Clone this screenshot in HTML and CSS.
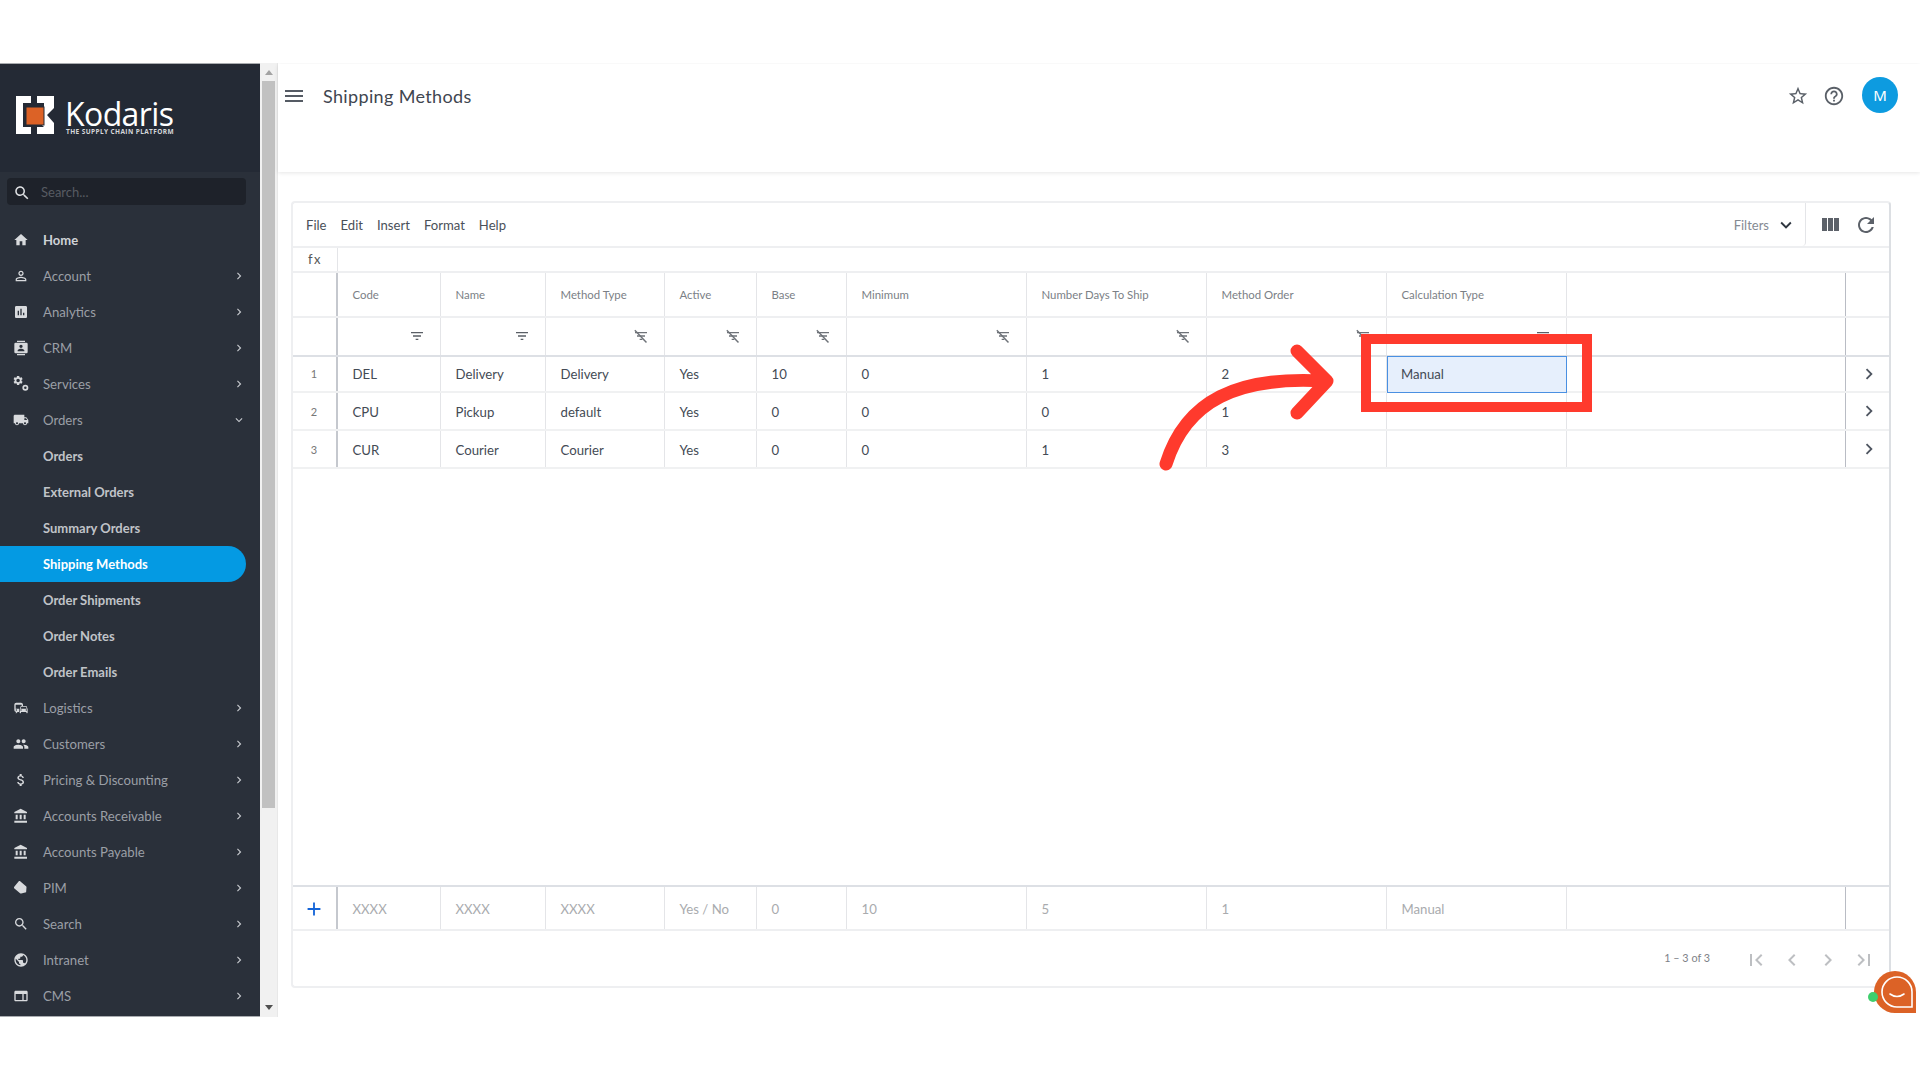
FILE: index.html
```html
<!DOCTYPE html>
<html lang="en">
<head>
<meta charset="utf-8">
<title>Shipping Methods</title>
<link rel="stylesheet" href="styles.css">
</head>
<body>
<svg class="sprite" aria-hidden="true">
  <symbol id="i-home" viewBox="0 0 24 24"><path d="M10 20v-6h4v6h5v-8h3L12 3 2 12h3v8z"/></symbol>
  <symbol id="i-search" viewBox="0 0 24 24"><path d="M15.5 14h-.79l-.28-.27C15.41 12.59 16 11.11 16 9.5 16 5.91 13.09 3 9.5 3S3 5.91 3 9.5 5.91 16 9.5 16c1.61 0 3.09-.59 4.23-1.57l.27.28v.79l5 4.99L20.49 19l-4.99-5zm-6 0C7.01 14 5 11.99 5 9.5S7.01 5 9.5 5 14 7.01 14 9.5 11.99 14 9.5 14z"/></symbol>
  <symbol id="i-person" viewBox="0 0 24 24"><path d="M12 5.9c1.16 0 2.1.94 2.1 2.1s-.94 2.1-2.1 2.1S9.9 9.16 9.9 8s.94-2.1 2.1-2.1m0 9c2.97 0 6.1 1.46 6.1 2.1v1.1H5.9V17c0-.64 3.13-2.1 6.1-2.1M12 4C9.79 4 8 5.79 8 8s1.79 4 4 4 4-1.79 4-4-1.79-4-4-4zm0 9c-2.67 0-8 1.34-8 4v3h16v-3c0-2.66-5.33-4-8-4z"/></symbol>
  <symbol id="i-chart" viewBox="0 0 24 24"><path d="M19 3H5c-1.1 0-2 .9-2 2v14c0 1.1.9 2 2 2h14c1.1 0 2-.9 2-2V5c0-1.1-.9-2-2-2zM9 17H7v-7h2v7zm4 0h-2V7h2v10zm4 0h-2v-4h2v4z"/></symbol>
  <symbol id="i-contact" viewBox="0 0 24 24"><path fill-rule="evenodd" d="M6 1h12v2H6zM6 21h12v2H6zM4 4h16a2 2 0 0 1 2 2v12a2 2 0 0 1-2 2H4a2 2 0 0 1-2-2V6a2 2 0 0 1 2-2zm8 3a2.5 2.5 0 1 0 0 5 2.5 2.5 0 0 0 0-5zm-5 10h10v-1.5c0-1.7-3.3-2.5-5-2.5s-5 .8-5 2.5z"/></symbol>
  <symbol id="i-gears" viewBox="0 0 24 24"><g transform="translate(-1 -2) scale(.72)"><path d="M19.14 12.94c.04-.3.06-.61.06-.94 0-.32-.02-.64-.07-.94l2.03-1.58c.18-.14.23-.41.12-.61l-1.92-3.32c-.12-.22-.37-.29-.59-.22l-2.39.96c-.5-.38-1.03-.7-1.62-.94l-.36-2.54c-.04-.24-.24-.41-.48-.41h-3.84c-.24 0-.43.17-.47.41l-.36 2.54c-.59.24-1.13.57-1.62.94l-2.39-.96c-.22-.08-.47 0-.59.22L2.74 8.87c-.12.21-.08.47.12.61l2.03 1.58c-.05.3-.09.63-.09.94s.02.64.07.94l-2.03 1.58c-.18.14-.23.41-.12.61l1.92 3.32c.12.22.37.29.59.22l2.39-.96c.5.38 1.03.7 1.62.94l.36 2.54c.05.24.24.41.48.41h3.84c.24 0 .44-.17.47-.41l.36-2.54c.59-.24 1.13-.56 1.62-.94l2.39.96c.22.08.47 0 .59-.22l1.92-3.32c.12-.22.07-.47-.12-.61l-2.01-1.58zM12 15.6c-1.98 0-3.6-1.62-3.6-3.6s1.62-3.6 3.6-3.6 3.6 1.62 3.6 3.6-1.62 3.6-3.6 3.6z"/></g><path fill-rule="evenodd" d="M18.5 13a4.5 4.5 0 1 0 0 9 4.5 4.5 0 0 0 0-9zm0 2.6a1.9 1.9 0 1 1 0 3.8 1.9 1.9 0 0 1 0-3.8z"/></symbol>
  <symbol id="i-truck" viewBox="0 0 24 24"><path d="M20 8h-3V4H3c-1.1 0-2 .9-2 2v11h2c0 1.66 1.34 3 3 3s3-1.34 3-3h6c0 1.66 1.34 3 3 3s3-1.34 3-3h2v-5l-3-4zM6 18.5c-.83 0-1.5-.67-1.5-1.5s.67-1.5 1.5-1.5 1.5.67 1.5 1.5-.67 1.5-1.5 1.5zm13.5-9l1.96 2.5H17V9.5h2.5zm-1.5 9c-.83 0-1.5-.67-1.5-1.5s.67-1.5 1.5-1.5 1.5.67 1.5 1.5-.67 1.5-1.5 1.5z"/></symbol>
  <symbol id="i-commute" viewBox="0 0 24 24"><path d="M12 4H5C3.34 4 2 5.34 2 7v8c0 1.66 1.34 3 3 3l-1 1v1h1l2-2h2v-5H4V6.98L13 7v2h2V7c0-1.66-1.34-3-3-3zM5 14c.55 0 1 .45 1 1s-.45 1-1 1-1-.45-1-1 .45-1 1-1zm15.57-4.34c-.14-.4-.52-.66-.97-.66h-7.19c-.46 0-.83.26-.98.66L10 13.77l.01 5.51c0 .38.31.72.69.72h.62c.38 0 .68-.38.68-.76V18h8v1.24c0 .38.31.76.69.76h.61c.38 0 .69-.34.69-.72l.01-5.51-1.43-4.11zm-8.16.34h7.19l1.03 3h-9.25l1.03-3zM12 16c-.55 0-1-.45-1-1s.45-1 1-1 1 .45 1 1-.45 1-1 1zm8 0c-.55 0-1-.45-1-1s.45-1 1-1 1 .45 1 1-.45 1-1 1z"/></symbol>
  <symbol id="i-people" viewBox="0 0 24 24"><path d="M16 11c1.66 0 2.99-1.34 2.99-3S17.66 5 16 5c-1.66 0-3 1.34-3 3s1.34 3 3 3zm-8 0c1.66 0 2.99-1.34 2.99-3S9.66 5 8 5C6.34 5 5 6.34 5 8s1.34 3 3 3zm0 2c-2.33 0-7 1.17-7 3.5V19h14v-2.5c0-2.33-4.67-3.5-7-3.5zm8 0c-.29 0-.62.02-.97.05 1.16.84 1.97 1.97 1.97 3.45V19h6v-2.5c0-2.33-4.67-3.5-7-3.5z"/></symbol>
  <symbol id="i-money" viewBox="0 0 24 24"><path d="M11.8 10.9c-2.27-.59-3-1.2-3-2.15 0-1.09 1.01-1.85 2.7-1.85 1.78 0 2.44.85 2.5 2.1h2.21c-.07-1.72-1.12-3.3-3.21-3.81V3h-3v2.16c-1.94.42-3.5 1.68-3.5 3.61 0 2.31 1.91 3.46 4.7 4.13 2.5.6 3 1.48 3 2.41 0 .69-.49 1.79-2.7 1.79-2.06 0-2.87-.92-2.98-2.1h-2.2c.12 2.19 1.76 3.42 3.68 3.83V21h3v-2.15c1.95-.37 3.5-1.5 3.5-3.55 0-2.84-2.43-3.81-4.7-4.4z"/></symbol>
  <symbol id="i-bank" viewBox="0 0 24 24"><path d="M4 10v7h3v-7H4zm6 0v7h3v-7h-3zM2 22h19v-3H2v3zm14-12v7h3v-7h-3zm-4.5-9L2 6v2h19V6l-9.5-5z"/></symbol>
  <symbol id="i-tag" viewBox="0 0 24 24"><path transform="rotate(40 12 12)" d="M17.63 5.84C17.27 5.33 16.67 5 16 5L5 5.01C3.9 5.01 3 5.9 3 7v10c0 1.1.9 1.99 2 1.99L16 19c.67 0 1.27-.33 1.63-.84L22 12l-4.37-6.16z"/></symbol>
  <symbol id="i-globe" viewBox="0 0 24 24"><path d="M12 2C6.48 2 2 6.48 2 12s4.48 10 10 10 10-4.48 10-10S17.52 2 12 2zm-1 17.93c-3.95-.49-7-3.85-7-7.93 0-.62.08-1.21.21-1.79L9 15v1c0 1.1.9 2 2 2v1.93zm6.9-2.54c-.26-.81-1-1.39-1.9-1.39h-1v-3c0-.55-.45-1-1-1H8v-2h2c.55 0 1-.45 1-1V7h2c1.1 0 2-.9 2-2v-.41c2.93 1.19 5 4.06 5 7.41 0 2.08-.8 3.97-2.1 5.39z"/></symbol>
  <symbol id="i-web" viewBox="0 0 24 24"><path d="M20 4H4c-1.1 0-1.99.9-1.99 2L2 18c0 1.1.9 2 2 2h16c1.1 0 2-.9 2-2V6c0-1.1-.9-2-2-2zm0 14h-4V9h4v9zm-6 0H4V9h10v9z"/></symbol>
  <symbol id="i-right" viewBox="0 0 24 24"><path d="M10 6L8.59 7.41 13.17 12l-4.58 4.59L10 18l6-6z"/></symbol>
  <symbol id="i-left" viewBox="0 0 24 24"><path d="M15.41 7.41L14 6l-6 6 6 6 1.41-1.41L10.83 12z"/></symbol>
  <symbol id="i-down" viewBox="0 0 24 24"><path d="M16.59 8.59L12 13.17 7.41 8.59 6 10l6 6 6-6z"/></symbol>
  <symbol id="i-first" viewBox="0 0 24 24"><path d="M18.41 16.59L13.82 12l4.59-4.59L17 6l-6 6 6 6zM6 6h2v12H6z"/></symbol>
  <symbol id="i-last" viewBox="0 0 24 24"><path d="M5.59 7.41L10.18 12l-4.59 4.59L7 18l6-6-6-6zM16 6h2v12h-2z"/></symbol>
  <symbol id="i-menu" viewBox="0 0 24 24"><path d="M3 18h18v-2H3v2zm0-5h18v-2H3v2zm0-7v2h18V6H3z"/></symbol>
  <symbol id="i-star" viewBox="0 0 24 24"><path d="M22 9.24l-7.19-.62L12 2 9.19 8.63 2 9.24l5.46 4.73L5.82 21 12 17.27 18.18 21l-1.63-7.03L22 9.24zM12 15.4l-3.76 2.27 1-4.28-3.32-2.88 4.38-.38L12 6.1l1.71 4.04 4.38.38-3.32 2.88 1 4.28L12 15.4z"/></symbol>
  <symbol id="i-help" viewBox="0 0 24 24"><path d="M11 18h2v-2h-2v2zm1-16C6.48 2 2 6.48 2 12s4.48 10 10 10 10-4.48 10-10S17.52 2 12 2zm0 18c-4.41 0-8-3.59-8-8s3.59-8 8-8 8 3.59 8 8-3.59 8-8 8zm0-14c-2.21 0-4 1.79-4 4h2c0-1.1.9-2 2-2s2 .9 2 2c0 2-3 1.75-3 5h2c0-2.25 3-2.5 3-5 0-2.21-1.79-4-4-4z"/></symbol>
  <symbol id="i-cols" viewBox="0 0 24 24"><path d="M10 18h5V5h-5v13zm-6 0h5V5H4v13zM16 5v13h5V5h-5z"/></symbol>
  <symbol id="i-refresh" viewBox="0 0 24 24"><path d="M17.65 6.35C16.2 4.9 14.21 4 12 4c-4.42 0-7.99 3.58-7.99 8s3.57 8 7.99 8c3.73 0 6.84-2.55 7.73-6h-2.08c-.82 2.33-3.04 4-5.65 4-3.31 0-6-2.69-6-6s2.69-6 6-6c1.66 0 3.14.69 4.22 1.78L13 11h7V4l-2.35 2.35z"/></symbol>
  <symbol id="i-filter" viewBox="0 0 24 24"><path d="M10 18h4v-2h-4v2zM3 6v2h18V6H3zm3 7h12v-2H6v2z"/></symbol>
  <symbol id="i-nofilter" viewBox="0 0 24 24"><path d="M10 18h4v-2h-4v2zM3 6v2h18V6H3zm3 7h12v-2H6v2z"/><path d="M3.5 2.5L21 21l-1.6 1.5L2 4z"/></symbol>
  <symbol id="i-add" viewBox="0 0 24 24"><path d="M19 13h-6v6h-2v-6H5v-2h6V5h2v6h6v2z"/></symbol>
</svg>

<div class="app">
  <aside class="sidebar">
    <div class="sidebar-body">
      <div class="brand">
        <svg class="brand-mark" viewBox="0 0 40 40">
          <path class="mark-white" d="M1 1h15v7H8v24h8v7H1z"/>
          <path class="mark-white" d="M22 1h17v12l-7 7 7 8v11H22v-7h7l-6-6v-7l6-6V8h-7z"/>
          <rect class="mark-orange" x="11" y="12" width="18" height="18"/>
        </svg>
        <div class="brand-text">
          <div class="brand-name">Kodaris</div>
          <div class="brand-tag">THE SUPPLY CHAIN PLATFORM</div>
        </div>
      </div>
      <div class="side-search">
        <svg class="side-search-icon"><use href="#i-search"/></svg>
        <span>Search...</span>
      </div>
      <nav class="nav">
        <a class="nav-item is-home"><svg class="nav-icon"><use href="#i-home"/></svg><span class="nav-label">Home</span></a>
        <a class="nav-item"><svg class="nav-icon"><use href="#i-person"/></svg><span class="nav-label">Account</span><svg class="nav-arrow"><use href="#i-right"/></svg></a>
        <a class="nav-item"><svg class="nav-icon"><use href="#i-chart"/></svg><span class="nav-label">Analytics</span><svg class="nav-arrow"><use href="#i-right"/></svg></a>
        <a class="nav-item"><svg class="nav-icon"><use href="#i-contact"/></svg><span class="nav-label">CRM</span><svg class="nav-arrow"><use href="#i-right"/></svg></a>
        <a class="nav-item"><svg class="nav-icon"><use href="#i-gears"/></svg><span class="nav-label">Services</span><svg class="nav-arrow"><use href="#i-right"/></svg></a>
        <a class="nav-item"><svg class="nav-icon"><use href="#i-truck"/></svg><span class="nav-label">Orders</span><svg class="nav-arrow"><use href="#i-down"/></svg></a>
        <a class="nav-item sub">Orders</a>
        <a class="nav-item sub">External Orders</a>
        <a class="nav-item sub">Summary Orders</a>
        <a class="nav-item sub active">Shipping Methods</a>
        <a class="nav-item sub">Order Shipments</a>
        <a class="nav-item sub">Order Notes</a>
        <a class="nav-item sub">Order Emails</a>
        <a class="nav-item"><svg class="nav-icon"><use href="#i-commute"/></svg><span class="nav-label">Logistics</span><svg class="nav-arrow"><use href="#i-right"/></svg></a>
        <a class="nav-item"><svg class="nav-icon"><use href="#i-people"/></svg><span class="nav-label">Customers</span><svg class="nav-arrow"><use href="#i-right"/></svg></a>
        <a class="nav-item"><svg class="nav-icon"><use href="#i-money"/></svg><span class="nav-label">Pricing &amp; Discounting</span><svg class="nav-arrow"><use href="#i-right"/></svg></a>
        <a class="nav-item"><svg class="nav-icon"><use href="#i-bank"/></svg><span class="nav-label">Accounts Receivable</span><svg class="nav-arrow"><use href="#i-right"/></svg></a>
        <a class="nav-item"><svg class="nav-icon"><use href="#i-bank"/></svg><span class="nav-label">Accounts Payable</span><svg class="nav-arrow"><use href="#i-right"/></svg></a>
        <a class="nav-item"><svg class="nav-icon"><use href="#i-tag"/></svg><span class="nav-label">PIM</span><svg class="nav-arrow"><use href="#i-right"/></svg></a>
        <a class="nav-item"><svg class="nav-icon"><use href="#i-search"/></svg><span class="nav-label">Search</span><svg class="nav-arrow"><use href="#i-right"/></svg></a>
        <a class="nav-item"><svg class="nav-icon"><use href="#i-globe"/></svg><span class="nav-label">Intranet</span><svg class="nav-arrow"><use href="#i-right"/></svg></a>
        <a class="nav-item"><svg class="nav-icon"><use href="#i-web"/></svg><span class="nav-label">CMS</span><svg class="nav-arrow"><use href="#i-right"/></svg></a>
      </nav>
    </div>
    <div class="scrollbar">
      <div class="sb-up"></div>
      <div class="sb-thumb"></div>
      <div class="sb-down"></div>
    </div>
  </aside>

  <main class="main">
    <header class="topbar">
      <svg class="topbar-menu"><use href="#i-menu"/></svg>
      <h1 class="title">Shipping Methods</h1>
      <div class="topbar-actions">
        <svg class="top-icon"><use href="#i-star"/></svg>
        <svg class="top-icon"><use href="#i-help"/></svg>
        <div class="avatar">M</div>
      </div>
    </header>

    <section class="card">
      <div class="menubar">
        <div class="menu-items"><span>File</span><span>Edit</span><span>Insert</span><span>Format</span><span>Help</span></div>
        <div class="filters"><span>Filters</span><svg class="filters-arrow"><use href="#i-down"/></svg></div>
        <div class="tools">
          <svg class="tool-icon"><use href="#i-cols"/></svg>
          <svg class="tool-icon"><use href="#i-refresh"/></svg>
        </div>
      </div>
      <div class="fx-row"><div class="fx">fx</div></div>

      <div class="row head">
        <div class="cell idx"></div>
        <div class="cell">Code</div><div class="cell">Name</div><div class="cell">Method Type</div><div class="cell">Active</div><div class="cell">Base</div><div class="cell">Minimum</div><div class="cell">Number Days To Ship</div><div class="cell">Method Order</div><div class="cell">Calculation Type</div>
        <div class="cell end"></div><div class="cell"></div>
      </div>
      <div class="row filter-row">
        <div class="cell idx"></div>
        <div class="cell"><svg class="fi on"><use href="#i-filter"/></svg></div>
        <div class="cell"><svg class="fi on"><use href="#i-filter"/></svg></div>
        <div class="cell"><svg class="fi"><use href="#i-nofilter"/></svg></div>
        <div class="cell"><svg class="fi"><use href="#i-nofilter"/></svg></div>
        <div class="cell"><svg class="fi"><use href="#i-nofilter"/></svg></div>
        <div class="cell"><svg class="fi"><use href="#i-nofilter"/></svg></div>
        <div class="cell"><svg class="fi"><use href="#i-nofilter"/></svg></div>
        <div class="cell"><svg class="fi"><use href="#i-nofilter"/></svg></div>
        <div class="cell"><svg class="fi on"><use href="#i-filter"/></svg></div>
        <div class="cell end"></div><div class="cell"></div>
      </div>
      <div class="row data first">
        <div class="cell idx">1</div><div class="cell">DEL</div><div class="cell">Delivery</div><div class="cell">Delivery</div><div class="cell">Yes</div><div class="cell">10</div><div class="cell">0</div><div class="cell">1</div><div class="cell">2</div><div class="cell selected">Manual</div>
        <div class="cell end"></div><div class="cell go"><svg class="go-icon"><use href="#i-right"/></svg></div>
      </div>
      <div class="row data">
        <div class="cell idx">2</div><div class="cell">CPU</div><div class="cell">Pickup</div><div class="cell">default</div><div class="cell">Yes</div><div class="cell">0</div><div class="cell">0</div><div class="cell">0</div><div class="cell">1</div><div class="cell"></div>
        <div class="cell end"></div><div class="cell go"><svg class="go-icon"><use href="#i-right"/></svg></div>
      </div>
      <div class="row data">
        <div class="cell idx">3</div><div class="cell">CUR</div><div class="cell">Courier</div><div class="cell">Courier</div><div class="cell">Yes</div><div class="cell">0</div><div class="cell">0</div><div class="cell">1</div><div class="cell">3</div><div class="cell"></div>
        <div class="cell end"></div><div class="cell go"><svg class="go-icon"><use href="#i-right"/></svg></div>
      </div>
      <div class="grid-space"></div>
      <div class="row add-row">
        <div class="cell idx"><svg class="add-icon"><use href="#i-add"/></svg></div>
        <div class="cell">XXXX</div><div class="cell">XXXX</div><div class="cell">XXXX</div><div class="cell">Yes / No</div><div class="cell">0</div><div class="cell">10</div><div class="cell">5</div><div class="cell">1</div><div class="cell">Manual</div>
        <div class="cell end"></div><div class="cell"></div>
      </div>
      <div class="pager">
        <span class="pager-text">1 – 3 of 3</span>
        <svg class="pager-icon"><use href="#i-first"/></svg>
        <svg class="pager-icon"><use href="#i-left"/></svg>
        <svg class="pager-icon"><use href="#i-right"/></svg>
        <svg class="pager-icon"><use href="#i-last"/></svg>
      </div>
    </section>
  </main>
</div>

<div class="callout"></div>
<svg class="arrow" viewBox="0 0 1920 1080">
  <path d="M1166 464C1186 400 1238 376 1324 381M1297 351L1327 381L1297 413"/>
</svg>
<div class="chat">
  <svg class="chat-face" viewBox="0 0 42 42">
    <path class="chat-bg" d="M21 0a21 21 0 0 1 21 21v21H21a21 21 0 0 1 0-42z"/>
    <path class="chat-line" d="M23 6a15 15 0 0 1 15 15v15H23a15 15 0 0 1 0-30z"/>
    <path class="chat-line" d="M16 23q7 5 14 0"/>
  </svg>
  <span class="chat-dot"></span>
</div>
</body>
</html>
```

FILE: styles.css
```css
* { box-sizing: border-box; }
html, body { margin: 0; padding: 0; }
body {
  width: 1920px;
  height: 1080px;
  overflow: hidden;
  background: #fff;
  font-family: "Lato", "Noto Sans", sans-serif;
  color: #444b55;
  padding-top: 63px;
  position: relative;
}
.sprite { position: absolute; width: 0; height: 0; }
svg { fill: currentColor; display: block; }

.app {
  display: flex;
  height: 954px;
  overflow: hidden;
}

/* sidebar */
.sidebar { width: 278px; flex: none; display: flex; height: 100%; }
.sidebar-body {
  width: 260px;
  flex: none;
  background: #2a303a;
  overflow: hidden;
  border-top: 1px solid #a9acb0;
  border-bottom: 1px solid #a9acb0;
}
.brand {
  height: 108px;
  background: #242a35;
  display: flex;
  align-items: flex-start;
  padding: 31px 0 0 15px;
}
.brand-mark { width: 40px; height: 40px; flex: none; }
.mark-white { fill: #fff; }
.mark-orange { fill: #dc6226; stroke: #242a35; stroke-width: 1; }
.brand-text { margin-left: 10px; }
.brand-name { font-size: 32px; line-height: 26px; color: #fff; font-weight: 500; font-family: "Open Sans", sans-serif; letter-spacing: -.6px; margin-top: 6px; }
.brand-tag { font-size: 6.5px; line-height: 8px; font-weight: 700; color: #d5d7da; letter-spacing: .4px; white-space: nowrap; font-family: "Open Sans", sans-serif; margin: 1px 0 0 1px; }
.side-search {
  margin: 6px 14px 0 7px;
  height: 27px;
  background: #1e222a;
  border-radius: 4px;
  display: flex;
  align-items: center;
  padding-left: 6px;
  font-size: 13px;
  color: #575b62;
}
.side-search-icon { width: 18px; height: 18px; color: #dfe1e4; margin: 2px 10px 0 0; }
.nav { padding-top: 17px; }
.nav-item {
  display: flex;
  align-items: center;
  width: 246px;
  height: 36px;
  padding-left: 13px;
  font-size: 13.2px;
  color: #9b9fa6;
}
.nav-icon { width: 16px; height: 16px; color: #d8dadd; flex: none; margin-right: 14px; }
.nav-label { flex: 1; }
.nav-arrow { width: 14px; height: 14px; color: #c4c7cc; flex: none; }
.is-home { color: #d0d3d7; font-weight: 700; font-size: 13px; }
.sub { padding-left: 43px; color: #c0c3c8; font-weight: 700; font-size: 13px; }
.active {
  background: #049ae3;
  color: #fff;
  border-radius: 0 18px 18px 0;
}

/* page scrollbar */
.scrollbar {
  width: 18px;
  flex: none;
  background: #f1f1f1;
  display: flex;
  flex-direction: column;
  align-items: flex-start;
  padding-left: 2px;
  border-right: 1px solid #e8e8e8;
}
.sb-up { width: 0; height: 0; margin: 7px 0 6px 3px; border: 4px solid transparent; border-top: 0; border-bottom: 5px solid #a3a3a3; }
.sb-thumb { width: 13px; height: 727px; background: #c1c1c1; }
.sb-down { width: 0; height: 0; margin: auto 0 7px 3px; border: 4px solid transparent; border-bottom: 0; border-top: 5px solid #505050; }

/* main */
.main { flex: 1; min-width: 0; padding-top: 1px; }
.topbar {
  height: 108px;
  display: flex;
  align-items: flex-start;
  padding: 12px 22px 0 4px;
  box-shadow: 0 1px 4px rgba(0,0,0,.1);
  background: #fff;
}
.topbar-menu { width: 24px; height: 24px; color: #555b64; margin-top: 8px; }
.title { margin: 6px 0 0 17px; font-size: 18px; line-height: 28px; font-weight: 400; color: #3f4650; flex: 1; letter-spacing: .35px; }
.topbar-actions { display: flex; align-items: center; margin-top: 1px; }
.top-icon { width: 22px; height: 22px; color: #5a6068; margin-right: 14px; margin-top: 1px; }
.avatar {
  width: 36px;
  height: 36px;
  margin-left: 3px;
  border-radius: 50%;
  background: #0d9be0;
  color: #fff;
  font-size: 15px;
  display: flex;
  align-items: center;
  justify-content: center;
  font-family: "Noto Sans", sans-serif;
}

/* card */
.card {
  margin: 29px 29px 0 13px;
  height: 787px;
  border: 2px solid #eeeff1;
  border-right-color: #dcdfe3;
  border-radius: 4px;
  display: flex;
  flex-direction: column;
  font-size: 13.2px;
}
.menubar {
  height: 45px;
  flex: none;
  display: flex;
  align-items: center;
  border-bottom: 2px solid #eeeff1;
}
.menu-items { display: flex; gap: 14px; padding-left: 13px; flex: 1; color: #4a5059; font-size: 13.1px; }
.filters { display: flex; align-items: center; font-size: 13px; color: #858a92; height: 100%; padding-right: 8px; border-right: 1px solid #e4e5e8; border-radius: 0 0 4px 0; }
.filters-arrow { width: 22px; height: 22px; color: #2f3640; margin-left: 6px; }
.tools { display: flex; align-items: center; gap: 12px; padding: 0 11px 0 12px; }
.tool-icon { width: 24px; height: 24px; color: #5c6169; }
.fx-row { height: 25px; flex: none; border-bottom: 2px solid #eeeff1; }
.fx { width: 45px; height: 100%; text-align: center; font-size: 13px; line-height: 22px; border-right: 1px solid #e4e5e8; letter-spacing: 1.5px; color: #555; }

.row {
  display: grid;
  grid-template-columns: 45px 103px 105px 119px 92px 90px 180px 180px 180px 180px 279px 1fr;
  flex: none;
}
.cell {
  display: flex;
  align-items: center;
  padding-left: 14.5px;
  border-right: 1px solid #e4e5e8;
  min-width: 0;
}
.cell:last-child { border-right: 0; }
.cell.idx { padding-left: 0; padding-right: 1px; justify-content: center; border-right: 2px solid #c5c8ce; font-size: 11px; color: #777; }
.cell.end { border-right-color: #b9bcc4; }
.head { height: 45px; border-bottom: 2px solid #eeeff1; font-size: 11.4px; color: #7b7f86; }
.filter-row { height: 39px; border-bottom: 2px solid #dde0e5; }
.filter-row .cell { justify-content: flex-end; padding: 0 15px 2px 0; }
.fi { width: 16px; height: 16px; color: #6e7278; }
.fi.on { color: #5a5f66; }
.data { height: 38px; border-bottom: 2px solid #f0f1f2; }
.data .cell { padding-top: 1px; }
.data.first { height: 36px; }
.data.first .cell { padding-top: 0; padding-bottom: 1px; }
.data.first .selected { padding: 0 0 2px 13px; background: #e6effc; border: 1.5px solid #4a90e2; margin: -1px 0 -2px; }
.data .go { padding: 0; justify-content: center; }
.go-icon { width: 22px; height: 22px; color: #4f5661; margin-left: 2px; }
.grid-space { flex: 1; }
.add-row { height: 46px; border-top: 2px solid #dde0e5; border-bottom: 2px solid #eeeff1; color: #a9abae; }
.add-row .cell { padding-top: 1px; }
.add-icon { width: 22px; height: 22px; color: #1565d8; }
.pager {
  height: 55px;
  flex: none;
  display: flex;
  align-items: center;
  justify-content: flex-end;
  padding: 3px 13px 0 0;
  color: #bdbfc2;
}
.pager-text { font-size: 10.8px; color: #7d8187; margin: -6px 22px 0 0; }
.pager-icon { width: 24px; height: 24px; margin-left: 12px; }

/* annotation overlays */
.callout {
  position: absolute;
  left: 1361px;
  top: 334px;
  width: 231px;
  height: 78px;
  border: 10px solid #ff3a2d;
}
.arrow {
  position: absolute;
  left: 0;
  top: 0;
  width: 1920px;
  height: 1080px;
  fill: none;
  pointer-events: none;
}
.arrow path { stroke: #ff3a2d; stroke-width: 13; stroke-linecap: round; stroke-linejoin: round; fill: none; }

/* chat widget */
.chat { position: absolute; left: 1868px; top: 971px; width: 48px; height: 42px; }
.chat-face { position: absolute; right: 0; top: 0; width: 42px; height: 42px; }
.chat-bg { fill: #dc6226; }
.chat-line { fill: none; stroke: #fff; stroke-width: 1.6; stroke-linecap: round; }
.chat-dot { position: absolute; left: 0; top: 21px; width: 10px; height: 10px; border-radius: 50%; background: #3fcf6d; }
```
